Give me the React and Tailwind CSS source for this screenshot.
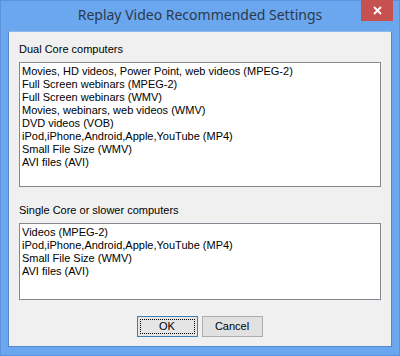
import React from "react";

const dual = [
  "Movies, HD videos, Power Point, web videos (MPEG-2)",
  "Full Screen webinars (MPEG-2)",
  "Full Screen webinars (WMV)",
  "Movies, webinars, web videos (WMV)",
  "DVD videos (VOB)",
  "iPod,iPhone,Android,Apple,YouTube (MP4)",
  "Small File Size (WMV)",
  "AVI files (AVI)",
];

const single = [
  "Videos (MPEG-2)",
  "iPod,iPhone,Android,Apple,YouTube (MP4)",
  "Small File Size (WMV)",
  "AVI files (AVI)",
];

const ListBox = ({ items, height }) => (
  <div className={`border border-[#828790] bg-white pl-[2px] pt-[2px] ${height}`}>
    {items.map((t) => (
      <div key={t} className="h-[13px] leading-[13px] whitespace-nowrap">{t}</div>
    ))}
  </div>
);

export default function App() {
  return (
    <div className="w-[400px] h-[356px] bg-[#6ba7ef] border border-[#5a93dc] flex flex-col text-black" style={{ fontFamily: '"Liberation Sans", Arial, sans-serif' }}>
      {/* title bar */}
      <div className="relative h-[30px] flex items-center justify-center">
        <span className="text-[14px] text-[#2b3a4c] mt-[-3px]" style={{ fontFamily: '"Noto Sans", "Open Sans", sans-serif' }}>
          Replay Video Recommended Settings
        </span>
        <div className="absolute right-[6px] top-[-1px] w-[32px] h-[21px] bg-[#c75050] flex items-center justify-center">
          <svg width="9" height="9" viewBox="0 0 9 9">
            <path d="M1 1 L8 8 M8 1 L1 8" stroke="white" strokeWidth="1.8" />
          </svg>
        </div>
      </div>

      {/* client area */}
      <div className="mx-[7px] mb-[8px] flex-1 bg-[#f0f0f0] border border-[#5487cc] border-t-[#8fb8ea] px-[10px] text-[11px] flex flex-col">
        <div className="mt-[11px] h-[13px] leading-[13px]">Dual Core computers</div>
        <div className="mt-[6px]">
          <ListBox items={dual} height="h-[125px]" />
        </div>
        <div className="mt-[17px] h-[13px] leading-[13px]">Single Core or slower computers</div>
        <div className="mt-[6px]">
          <ListBox items={single} height="h-[77px]" />
        </div>
        <div className="mt-[16px] flex justify-center gap-[4px] pr-[1px]">
          <button className="w-[61px] h-[21px] bg-[#e5e5e5] border border-[#3c7fb1] p-[2px]">
            <div className="w-full h-full border border-dotted border-black flex items-center justify-center">OK</div>
          </button>
          <button className="w-[61px] h-[21px] bg-[#e1e1e1] border border-[#adadad] flex items-center justify-center">
            Cancel
          </button>
        </div>
      </div>
    </div>
  );
}
